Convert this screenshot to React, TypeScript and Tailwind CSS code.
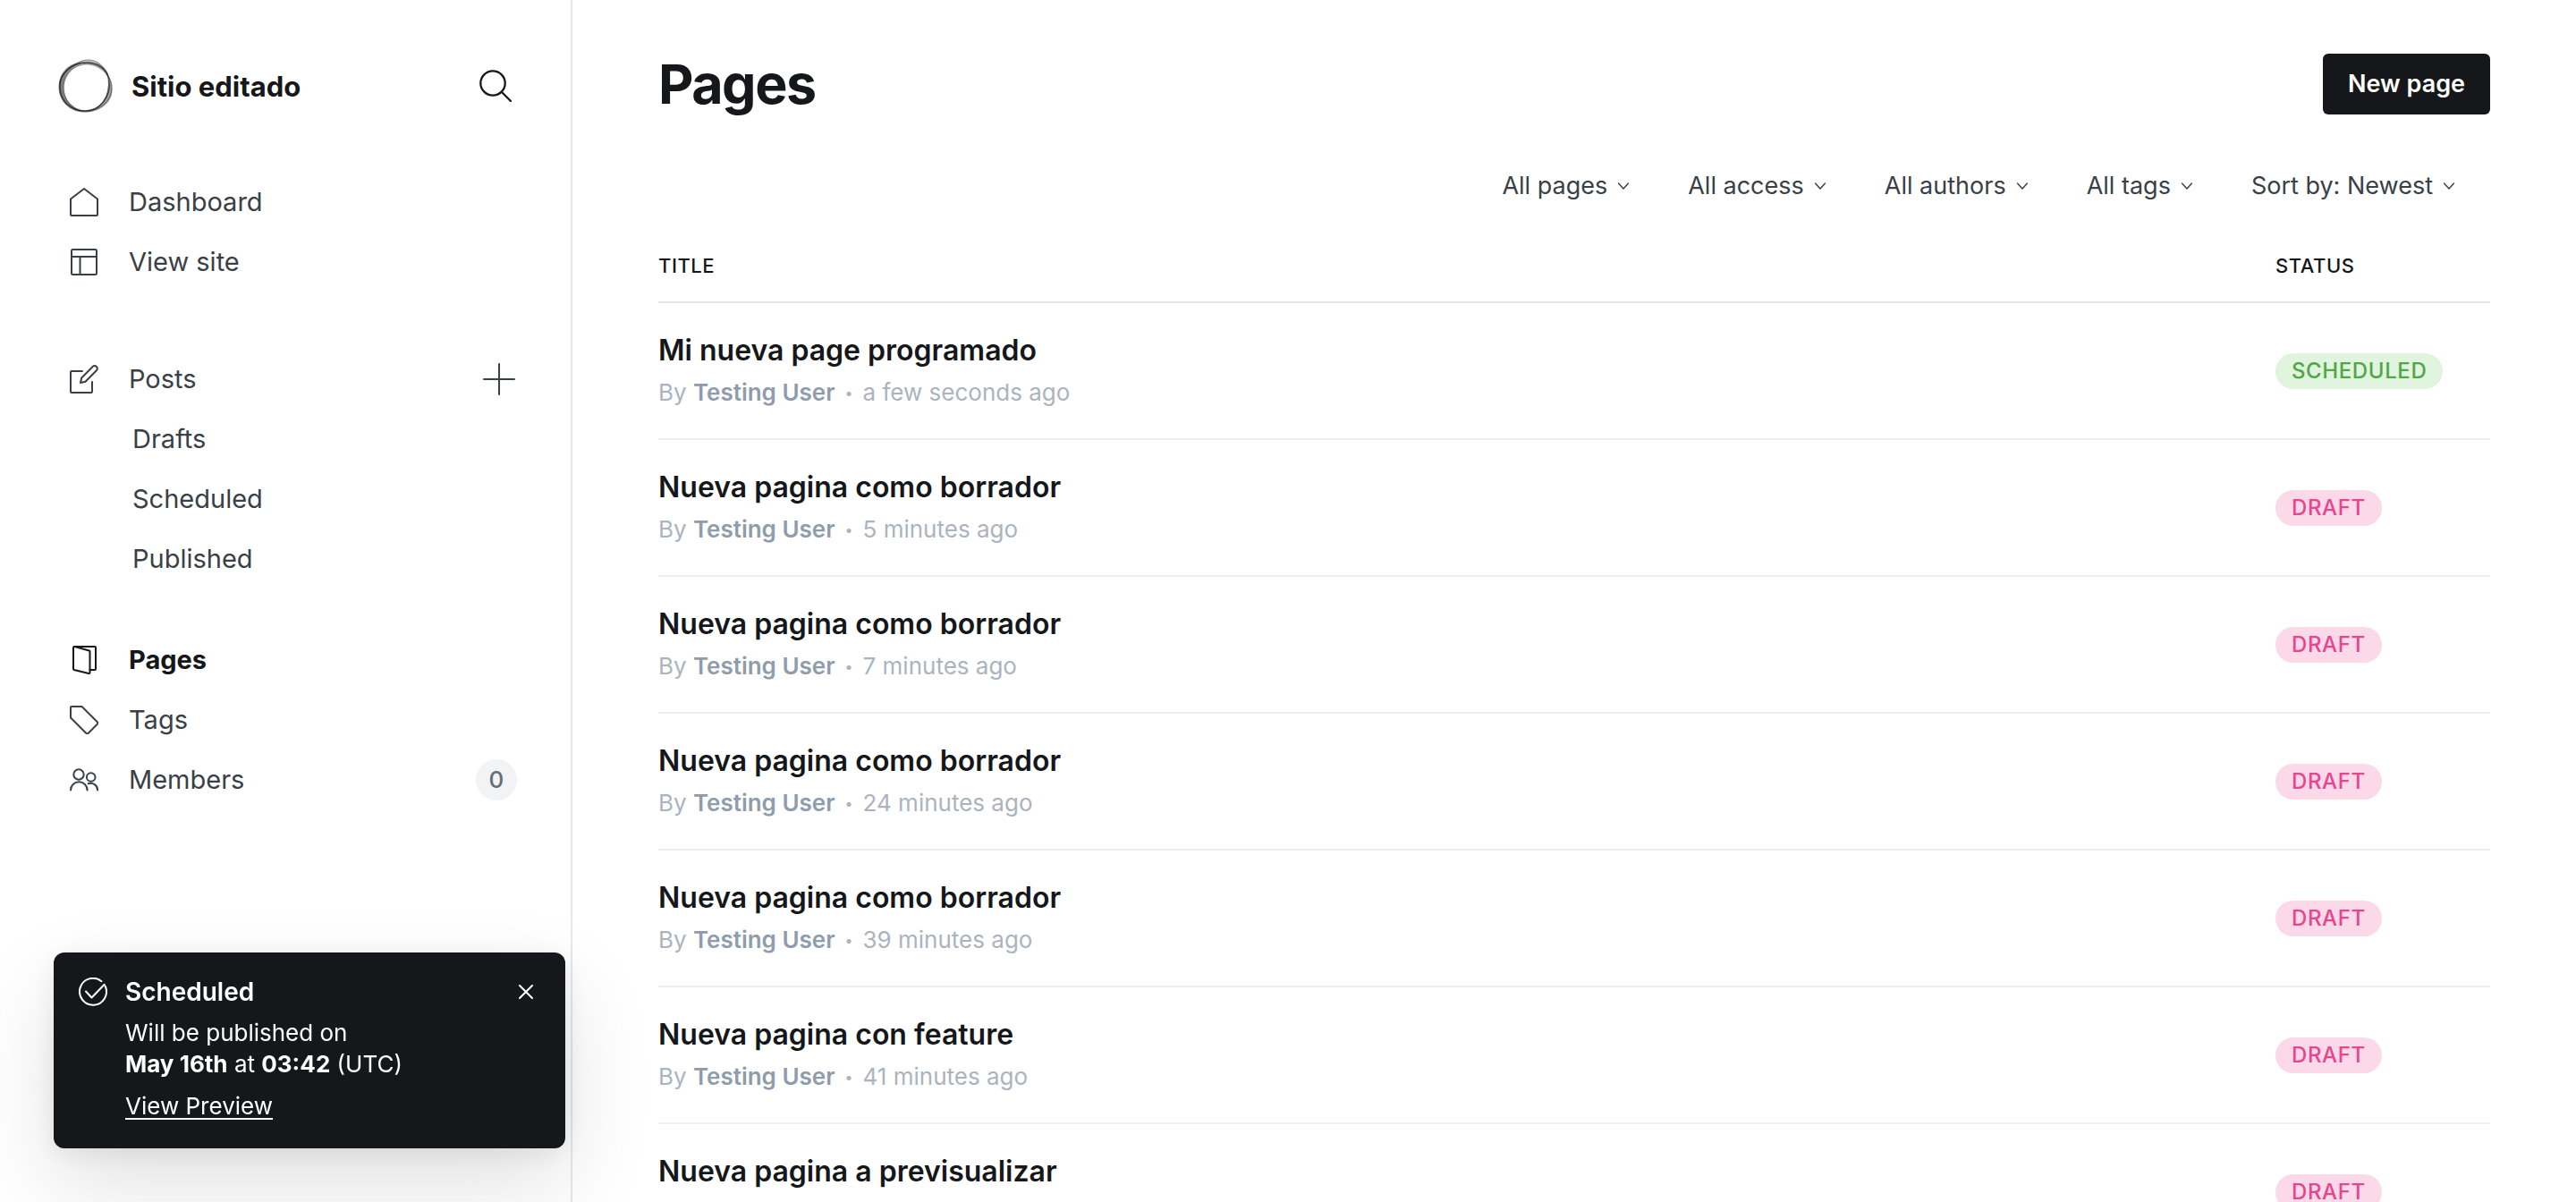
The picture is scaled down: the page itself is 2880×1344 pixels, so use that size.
import React from 'react';

type IconProps = { className?: string; children: React.ReactNode; strokeWidth?: number; viewBox?: string };

function Icon({ className = 'size-8', children, strokeWidth = 2, viewBox = '0 0 32 32' }: IconProps) {
  return (
    <svg
      className={`${className} shrink-0`}
      viewBox={viewBox}
      fill="none"
      stroke="currentColor"
      strokeWidth={strokeWidth}
      strokeLinecap="round"
      strokeLinejoin="round"
      aria-hidden="true"
    >
      {children}
    </svg>
  );
}

const HomeIcon = () => (
  <Icon>
    <path d="M1 12.5 16 1l15 11.5V30a1 1 0 0 1-1 1H2a1 1 0 0 1-1-1z" />
  </Icon>
);

const LayoutIcon = () => (
  <Icon>
    <rect x="2" y="2" width="28" height="28" rx="1.5" />
    <path d="M2 10h28M11.500 10v20" />
  </Icon>
);

const PostsIcon = () => (
  <Icon>
    <path d="M14 7H2a1 1 0 0 0-1 1v22a1 1 0 0 0 1 1h22a1 1 0 0 0 1-1V19" />
    <path d="m17.500 18.800-5.500 1.200 1.200-5.500L25.600 2a3 3 0 0 1 4.300 4.300z" />
  </Icon>
);

const PagesIcon = () => (
  <Icon>
    <path d="M22.500 27H28a1 1 0 0 0 1-1V2a1 1 0 0 0-1-1H5" />
    <path d="M4 2.200A1.200 1.200 0 0 1 5.500 1L21.700 5.500a1.200 1.200 0 0 1 .8 1.200V30a1 1 0 0 1-1.300 1L4.800 27a1.200 1.200 0 0 1-.8-1.200z" />
  </Icon>
);

const TagIcon = () => (
  <Icon>
    <path d="M1 2a1 1 0 0 1 1-1h11.500L31 18.500a1.400 1.400 0 0 1 0 2L20.500 31a1.400 1.400 0 0 1-2 0L1 13.500z" />
  </Icon>
);

const MembersIcon = () => (
  <Icon>
    <circle cx="10" cy="10" r="5.700" />
    <path d="M1 27.500a9.300 9.300 0 0 1 18.600 0" />
    <circle cx="23.700" cy="13" r="4.800" />
    <path d="M20.700 20.300a7.500 7.500 0 0 1 10.300 7.200" />
  </Icon>
);

const PlusIcon = () => (
  <Icon className="size-9" viewBox="0 0 36 36">
    <path d="M18 1v34M1 18h34" />
  </Icon>
);

const SearchIcon = () => (
  <Icon className="size-9" viewBox="0 0 36 36" strokeWidth={2.3}>
    <circle cx="15" cy="15" r="13.700" />
    <path d="m25 25 10 10" />
  </Icon>
);

const ChevronIcon = () => (
  <Icon className="w-3 h-2" viewBox="0 0 12 8" strokeWidth={1.5}>
    <path d="m0.500 1 5.500 6 5.500-6" />
  </Icon>
);

const CheckIcon = () => (
  <Icon>
    <path d="M25.500 4.200A15 15 0 1 0 29.600 9.500" />
    <path d="m8 15.500 6.500 7L28.700 7.800" />
  </Icon>
);

const CloseIcon = () => (
  <Icon className="size-4" viewBox="0 0 16 16">
    <path d="m1 1 14 14M15 1 1 15" />
  </Icon>
);

// Translucent bands of a hand-twisted ring: left, top right and lower right.
const bands = [
  { d: 'M30 4C14 2 1 14 1 30c0 14 9 28 28 29C14 54 6 44 6.500 31 7 17 17 7 30 4z', o: 0.5 },
  { d: 'M22 4C34-2 52 2 57 22c-3-8-12-15-22-16-5-.6-9-.6-13-2z', o: 0.28 },
  { d: 'M57 21c6 12 4 24-5 31-7 6-16 8-25 7 11-1 19-5 24-12 5-7 7-16 6-26z', o: 0.42 },
];

const strands = [
  { d: 'M56.500 22C54 10 44 4 32 4 15 4 2 16 2 31c0 16 12 27 28 27 16 0 29-14 26.500-36z', w: 1.6, o: 0.75 },
  { d: 'M57 21C53 8 43 1 34 1 28 1 23 3 19 6 8 12 1 20 1 31c0 17 13 28 28 28 17 0 31-12 31-27 0-4-1-8-3-11z', w: 1, o: 0.55 },
  { d: 'M58 24C55 14 45 6 34 5 20 5 7 16 6 31c0 14 9 26 24 27 16 0 29-14 28-34z', w: 1, o: 0.45 },
  { d: 'M55 19C49 10 40 6 31 6 16 7 4 18 4 33c1 14 12 25 26 25', w: 0.8, o: 0.4 },
];

function Logo() {
  return (
    <svg viewBox="0 0 62 60" className="h-[60px] w-[62px] shrink-0" aria-hidden="true">
      {bands.map((b) => (
        <path key={b.d} d={b.d} fill="#222" fillOpacity={b.o} />
      ))}
      {strands.map((s) => (
        <path key={s.d} d={s.d} fill="none" stroke="#1c1c1c" strokeWidth={s.w} strokeOpacity={s.o} />
      ))}
    </svg>
  );
}

function NavLink({ icon, label, active = false }: { icon: React.ReactNode; label: string; active?: boolean }) {
  return (
    <a
      href="#"
      className={`flex h-[67px] flex-1 items-center gap-[34px] ${active ? 'font-bold text-[#15171a]' : 'text-[#394047]'}`}
    >
      {icon}
      {label}
    </a>
  );
}

function SubLink({ label }: { label: string }) {
  return (
    <a href="#" className="flex h-[67px] items-center pl-[70px]">
      {label}
    </a>
  );
}

function Sidebar() {
  return (
    <aside className="flex w-[640px] shrink-0 flex-col border-r-2 border-[#e6e7e8] px-[60px]">
      <div className="mt-[66px] flex h-[60px] items-center pl-[5px]">
        <Logo />
        <span className="ml-5 pt-[2px] text-[31px] font-bold text-[#15171a]">Sitio editado</span>
        <button type="button" aria-label="Search" className="mr-[6px] ml-auto text-[#15171a]">
          <SearchIcon />
        </button>
      </div>
      <nav className="mt-[66px] pl-[18px] text-[29px] leading-9 text-[#394047]">
        <NavLink icon={<HomeIcon />} label="Dashboard" />
        <NavLink icon={<LayoutIcon />} label="View site" />
        <div className="mt-16 flex items-center pr-[2px]">
          <NavLink icon={<PostsIcon />} label="Posts" />
          <button type="button" aria-label="New post">
            <PlusIcon />
          </button>
        </div>
        <SubLink label="Drafts" />
        <SubLink label="Scheduled" />
        <SubLink label="Published" />
        <div className="mt-[46px]">
          <NavLink icon={<PagesIcon />} label="Pages" active />
        </div>
        <NavLink icon={<TagIcon />} label="Tags" />
        <div className="flex items-center">
          <NavLink icon={<MembersIcon />} label="Members" />
          <span className="flex size-[46px] items-center justify-center rounded-full bg-[#f1f3f4] text-[26px] font-medium text-[#626d79]">
            0
          </span>
        </div>
      </nav>
    </aside>
  );
}

const filters = ['All pages', 'All access', 'All authors', 'All tags', 'Sort by: Newest'];

const rows = [
  { title: 'Mi nueva page programado', time: 'a few seconds ago', scheduled: true },
  { title: 'Nueva pagina como borrador', time: '5 minutes ago' },
  { title: 'Nueva pagina como borrador', time: '7 minutes ago' },
  { title: 'Nueva pagina como borrador', time: '24 minutes ago' },
  { title: 'Nueva pagina como borrador', time: '39 minutes ago' },
  { title: 'Nueva pagina con feature', time: '41 minutes ago' },
  { title: 'Nueva pagina a previsualizar', time: '45 minutes ago' },
];

function Main() {
  return (
    <main className="h-full flex-1 overflow-hidden px-24">
      <header className="mt-[60px] flex h-[68px] items-center justify-between">
        <h1 className="text-[61px] leading-[68px] font-bold tracking-tight text-[#15171a]">Pages</h1>
        <button type="button" className="h-[68px] rounded-md bg-[#15171a] px-7 text-[27px] font-semibold text-white">
          New page
        </button>
      </header>
      <div className="mt-[61px] flex h-[38px] items-center justify-end gap-[66px] pr-10 text-[27px] text-[#394047]">
        {filters.map((f) => (
          <button type="button" key={f} className="flex items-center gap-3">
            {f}
            <ChevronIcon />
          </button>
        ))}
      </div>
      <table className="mt-[30px] w-full border-collapse text-left">
        <thead>
          <tr className="h-[81px] border-b-2 border-[#e6e7e8] text-[22px] text-[#15171a] uppercase">
            <th className="font-medium tracking-wide">Title</th>
            <th className="w-60 font-medium tracking-wide">Status</th>
          </tr>
        </thead>
        <tbody>
          {rows.map((r, i) => (
            <tr key={i} className="h-[153px] border-b-2 border-[#edeeef]">
              <td className="pb-[2px]">
                <a href="#" className="block">
                  <h3 className="text-[32px] leading-[50px] font-semibold text-[#15171a]">{r.title}</h3>
                  <p className="flex items-center text-[26px] leading-[44px] text-[#abb4be]">
                    <span>
                      By <span className="font-semibold text-[#8e9cac]">Testing User</span>
                    </span>
                    <span className="mx-[11px] text-base">•</span>
                    <span>{r.time}</span>
                  </p>
                </a>
              </td>
              <td>
                <span
                  className={`inline-flex h-10 items-center rounded-full px-[18px] text-2xl font-medium tracking-wide uppercase ${
                    r.scheduled ? 'bg-[#e1f4de] text-[#50a746]' : 'bg-[#fbd9e8] text-[#e6458f]'
                  }`}
                >
                  {r.scheduled ? 'Scheduled' : 'Draft'}
                </span>
              </td>
            </tr>
          ))}
        </tbody>
      </table>
    </main>
  );
}

function Toast() {
  return (
    <div
      role="status"
      className="fixed bottom-[60px] left-[60px] flex w-[572px] items-start gap-5 rounded-xl bg-[#15171a] pt-7 pr-9 pb-[30px] pl-7 text-[26px] leading-[35px] text-white shadow-[0_40px_100px_rgba(0,0,0,0.12),0_6px_30px_rgba(0,0,0,0.08)]"
    >
      <CheckIcon />
      <div className="flex-1">
        <p className="text-[28px] leading-8 font-semibold">Scheduled</p>
        <p className="mt-3">
          Will be published on
          <br />
          <strong>May 16th</strong> at <strong>03:42</strong> (UTC)
        </p>
        <a href="#" className="mt-3 inline-block underline decoration-2 underline-offset-4">
          View Preview
        </a>
      </div>
      <button type="button" aria-label="Close" className="flex h-8 items-center">
        <CloseIcon />
      </button>
    </div>
  );
}

export default function App() {
  return (
    <div className="flex h-screen overflow-hidden bg-white font-['Inter',sans-serif]">
      <Sidebar />
      <Main />
      <Toast />
    </div>
  );
}
